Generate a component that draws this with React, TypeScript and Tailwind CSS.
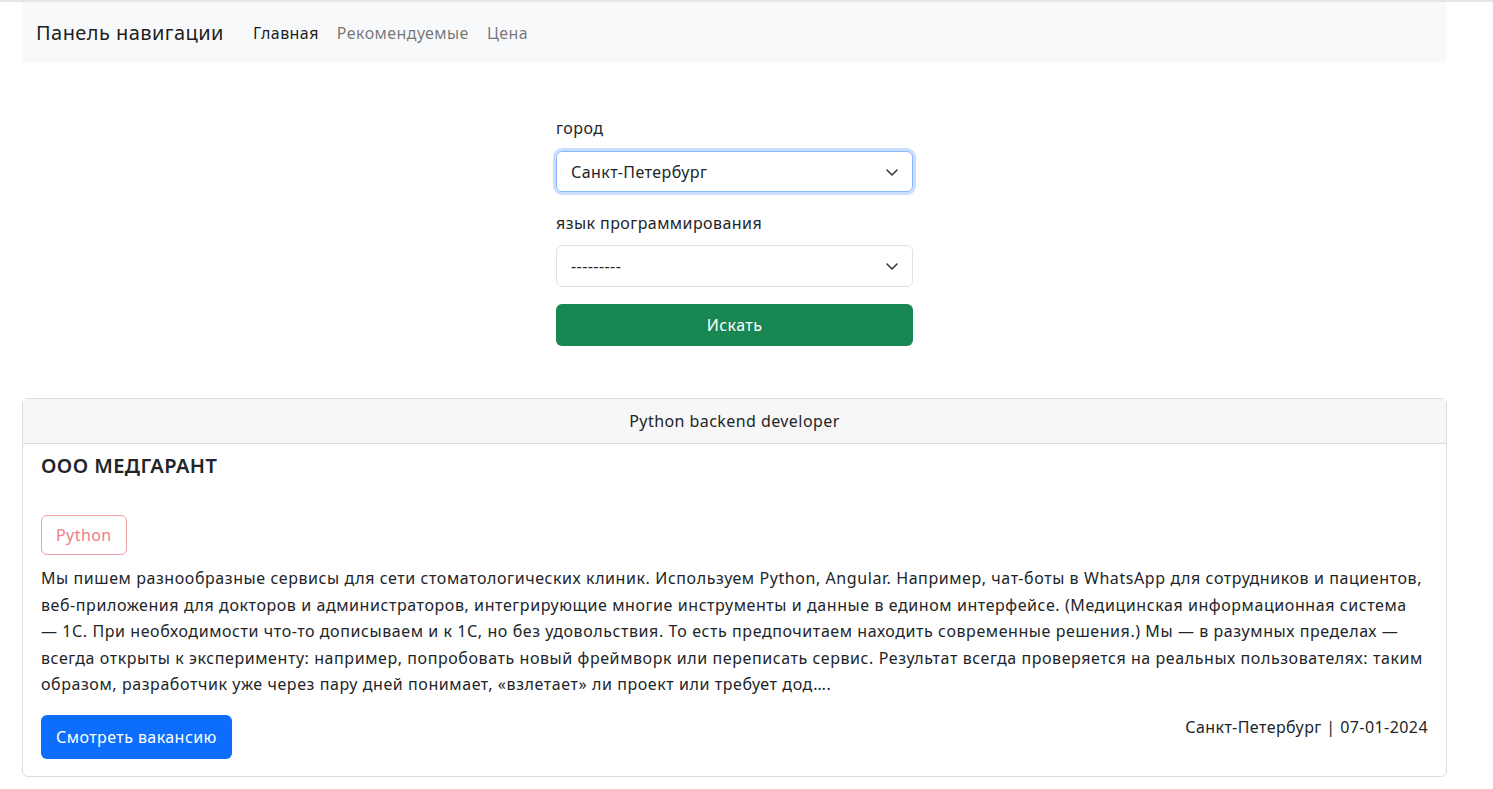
import React from "react";

const Chevron = () => (
  <svg width="16" height="16" viewBox="0 0 16 16" fill="none" className="absolute right-[13px] top-1/2 -translate-y-1/2">
    <path d="M3 6l5 5 5-5" stroke="#343a40" strokeWidth="1.6" strokeLinecap="round" strokeLinejoin="round" />
  </svg>
);

export default function App() {
  return (
    <div className="min-h-[789px] bg-white tracking-[0.027em] text-[#212529]" style={{ fontFamily: '"Noto Sans", sans-serif' }}>
      <div className="border-t-2 border-[#e5e5e5]" />
      <div className="mx-[22px] w-[1425px]">
        <nav className="flex h-[61px] items-center bg-[#f8f9fa] px-[14px]">
          <span className="mr-[29px] text-[20px] leading-[30px] text-[rgba(0,0,0,0.9)]">Панель навигации</span>
          <div className="flex gap-[18px] text-[16px]">
            <span className="text-[rgba(0,0,0,0.9)]">Главная</span>
            <span className="text-[rgba(0,0,0,0.55)]">Рекомендуемые</span>
            <span className="text-[rgba(0,0,0,0.55)]">Цена</span>
          </div>
        </nav>

        <form className="mx-auto mt-[53px] flex w-[357px] flex-col" onSubmit={(e) => e.preventDefault()}>
          <label className="mb-[11px] text-[16px] leading-[24px]">город</label>
          <div className="relative">
            <div className="flex h-[41px] items-center rounded-[6px] border border-[#86b7fe] pl-[14px] text-[16px] shadow-[0_0_0_3px_rgba(13,110,253,0.22)]">
              Санкт-Петербург
            </div>
            <Chevron />
          </div>
          <label className="mb-[10px] mt-[19px] text-[16px] leading-[24px]">язык программирования</label>
          <div className="relative">
            <div className="flex h-[42px] items-center rounded-[6px] border border-[#dee2e6] pl-[14px] text-[16px]">
              ---------
            </div>
            <Chevron />
          </div>
          <button className="mt-[17px] h-[42px] rounded-[6px] bg-[#198754] text-[16px] text-white">Искать</button>
        </form>

        <div className="mt-[52px] rounded-[6px] border border-[#dcdcdc]">
          <div className="flex h-[45px] items-center justify-center border-b border-[#dcdcdc] bg-[#f7f7f7] text-[16px]">
            Python backend developer
          </div>
          <div className="px-[18px] pb-[17px] pt-[10px]">
            <h5 className="text-[20px] font-semibold leading-[24px]">ООО МЕДГАРАНТ</h5>
            <div className="mt-[37px]">
              <span className="inline-flex h-[40px] items-center rounded-[6px] border border-[#ea868f] px-[14px] text-[16px] text-[#e4606d] opacity-80">
                Python
              </span>
            </div>
            <p className="mt-[10px] text-[16px] leading-[26.5px] tracking-[0.036em]">
              Мы пишем разнообразные сервисы для сети стоматологических клиник. Используем Python, Angular. Например, чат-боты в WhatsApp для сотрудников и пациентов,
              <br />
              веб-приложения для докторов и администраторов, интегрирующие многие инструменты и данные в едином интерфейсе. (Медицинская информационная система
              <br />
              — 1С. При необходимости что-то дописываем и к 1С, но без удовольствия. То есть предпочитаем находить современные решения.) Мы — в разумных пределах —
              <br />
              всегда открыты к эксперименту: например, попробовать новый фреймворк или переписать сервис. Результат всегда проверяется на реальных пользователях: таким
              <br />
              образом, разработчик уже через пару дней понимает, «взлетает» ли проект или требует дод….
            </p>
            <div className="mt-[17px] flex items-start justify-between">
              <button className="h-[44px] rounded-[6px] bg-[#0d6efd] px-[15px] text-[16px] text-white">Смотреть вакансию</button>
              <span className="text-[16px]">Санкт-Петербург | 07-01-2024</span>
            </div>
          </div>
        </div>
      </div>
    </div>
  );
}
